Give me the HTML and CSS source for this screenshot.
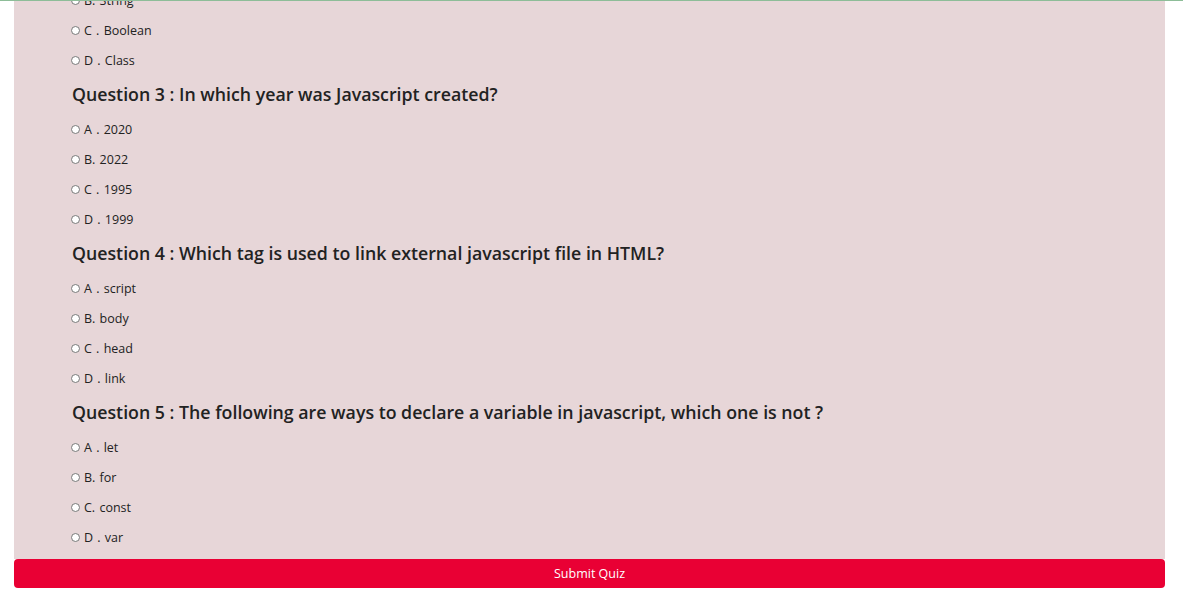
FILE: index.html
```html
<!DOCTYPE html>
<html lang="en">
<head>
<meta charset="utf-8">
<title>Quiz</title>
<link rel="stylesheet" href="styles.css">
</head>
<body>
<div class="topline"></div>
<form class="quiz">
  <div class="panel">
    <label class="option"><input type="radio" name="q2"> B. String</label>
    <label class="option"><input type="radio" name="q2"> C . Boolean</label>
    <label class="option"><input type="radio" name="q2"> D . Class</label>

    <h2 class="question">Question 3 : In which year was Javascript created?</h2>
    <label class="option"><input type="radio" name="q3"> A . 2020</label>
    <label class="option"><input type="radio" name="q3"> B. 2022</label>
    <label class="option"><input type="radio" name="q3"> C . 1995</label>
    <label class="option"><input type="radio" name="q3"> D . 1999</label>

    <h2 class="question">Question 4 : Which tag is used to link external javascript file in HTML?</h2>
    <label class="option"><input type="radio" name="q4"> A . script</label>
    <label class="option"><input type="radio" name="q4"> B. body</label>
    <label class="option"><input type="radio" name="q4"> C . head</label>
    <label class="option"><input type="radio" name="q4"> D . link</label>

    <h2 class="question">Question 5 : The following are ways to declare a variable in javascript, which one is not ?</h2>
    <label class="option"><input type="radio" name="q5"> A . let</label>
    <label class="option"><input type="radio" name="q5"> B. for</label>
    <label class="option"><input type="radio" name="q5"> C. const</label>
    <label class="option"><input type="radio" name="q5"> D . var</label>
  </div>
  <button type="submit" class="submit">Submit Quiz</button>
</form>
</body>
</html>
```
FILE: styles.css
```css
html, body {
  margin: 0;
  padding: 0;
  background: #ffffff;
}
body {
  font-family: "Open Sans", "Noto Sans", sans-serif;
  color: #222222;
}
.topline {
  position: fixed;
  top: 0;
  left: 0;
  right: 0;
  height: 1px;
  background: #8dbd98;
}
.quiz {
  width: 1151px;
  margin: -15px 0 0 14px;
  display: flex;
  flex-direction: column;
}
.panel {
  background: #e7d6d8;
  padding: 0 0 7px 57px;
  display: flex;
  flex-direction: column;
}
.option {
  height: 30px;
  display: flex;
  align-items: center;
  gap: 4px;
  font-size: 12.5px;
  word-spacing: 1px;
  color: #222222;
}
.option input {
  width: 9px;
  height: 9px;
  margin: 0;
}
.question {
  height: 37px;
  margin: 0;
  padding: 0 0 2px 1px;
  display: flex;
  align-items: center;
  font-size: 17.75px;
  font-weight: 600;
  color: #222222;
}
.submit {
  height: 29px;
  border: 0;
  border-radius: 4px;
  background: #e90034;
  color: #ffffff;
  font-family: "Open Sans", "Noto Sans", sans-serif;
  font-size: 12.5px;
  padding-bottom: 2px;
  cursor: pointer;
}
```
